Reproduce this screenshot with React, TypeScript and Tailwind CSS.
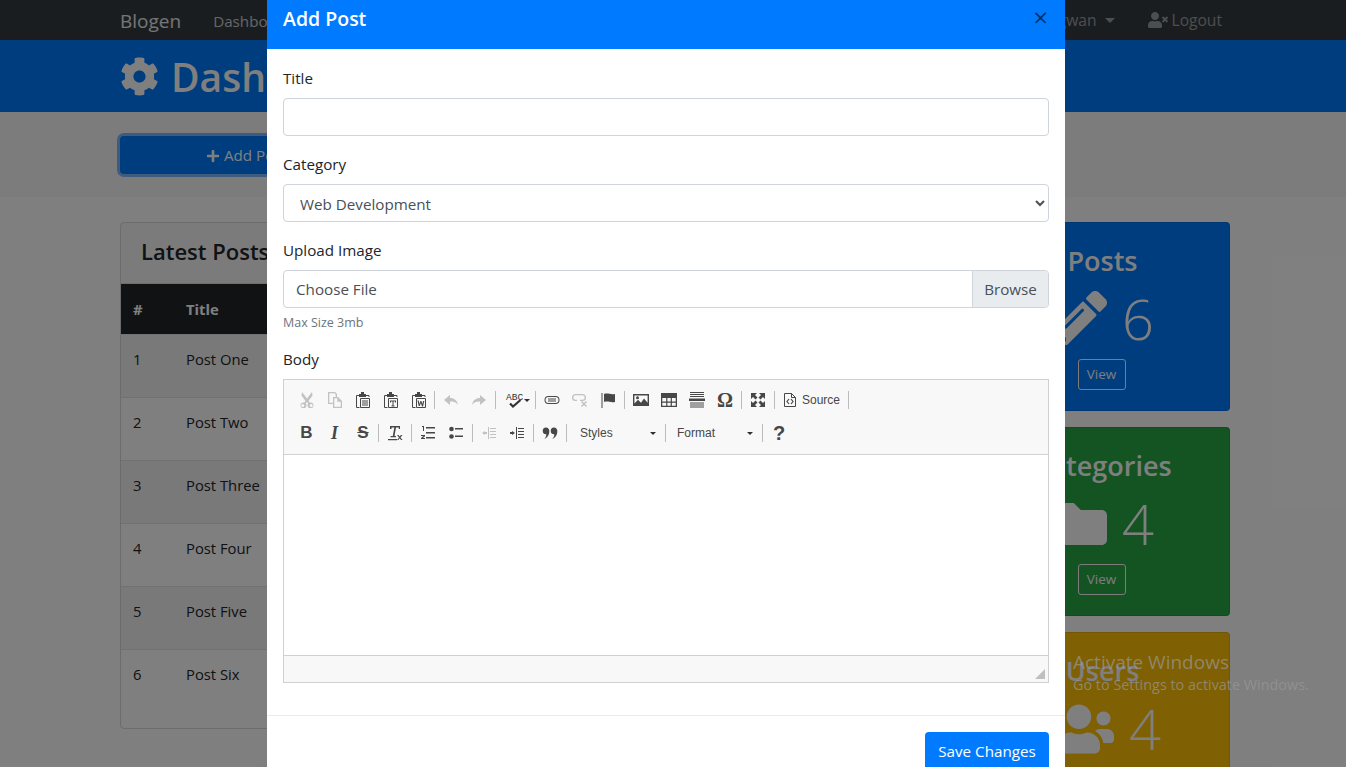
import type { ReactNode } from "react";
import { FaCog, FaFolder, FaPencilAlt, FaPlus, FaUsers, FaUserTimes } from "react-icons/fa";

const font = "font-['Open_Sans','Noto_Sans',sans-serif]";

const posts = ["Post One", "Post Two", "Post Three", "Post Four", "Post Five", "Post Six"];

function StatCard({ title, color, icon, count }: { title: string; color: string; icon: ReactNode; count: number }) {
  return (
    <div className={`h-[189px] rounded border border-black/10 p-5 text-center text-white ${color}`}>
      <h3 className="mb-2 h-[34px] pt-px whitespace-nowrap text-[27px] leading-[34px] font-semibold">{title}</h3>
      <div className="mb-[7px] flex h-[67px] items-center justify-center gap-[15px] text-[56px] leading-[67px] font-light">
        {icon}
        <span>{count}</span>
      </div>
      <button className="mr-[2px] h-[31px] w-12 rounded-[3px] border border-[#f8f9fa] text-[13.5px] text-[#f8f9fa]">View</button>
    </div>
  );
}

function Field({ label, children }: { label: string; children: ReactNode }) {
  return (
    <div className="mb-4">
      <label className="mb-2 block h-6 text-[15.2px] leading-6 text-[#212529]">{label}</label>
      {children}
    </div>
  );
}

function Btn({ children, off }: { children: ReactNode; off?: boolean }) {
  return (
    <span className={`flex h-7 w-7 shrink-0 items-center justify-center ${off ? "opacity-30" : ""}`}>
      <svg width="16" height="16" viewBox="0 0 16 16" fill="#474747">
        {children}
      </svg>
    </span>
  );
}

function Sep({ first }: { first?: boolean }) {
  return <span className={`mr-[2px] h-[18px] w-px shrink-0 bg-[#bcbcbc] ${first ? "ml-px" : "ml-[2px]"}`} />;
}

function Combo({ label, width, pad }: { label: string; width: string; pad: string }) {
  return (
    <span className={`flex h-7 shrink-0 items-center justify-between pr-[7px] ${pad} ${width}`}>
      <span>{label}</span>
      <span className="h-0 w-0 border-x-[3px] border-t-[3px] border-x-transparent border-t-[#2f2f2f]" />
    </span>
  );
}

// clipboard outline shared by the three paste buttons
const paste = (
  <>
    <path d="M4.500 3.500h-3v12H4.500M11 3.500h3V5" fill="none" stroke="#474747" />
    <path d="M4 2h2V0h3v2h2v3H4z" />
    <path d="M5.500 6.500h9v9h-9z" fill="none" stroke="#474747" />
  </>
);

function Toolbar() {
  return (
    <div className="h-[75px] border-b border-[#d1d1d1] bg-[#f8f8f8] pt-[6px] pl-[9px] font-['Liberation_Sans',sans-serif] text-[12px] text-[#474747]">
      <div className="mb-[5px] flex h-7 items-center">
        <Btn off>
          <path d="M3 0l5 6.500L13 0l.5 3.500L9.500 9l1.200 1.600a3 3 0 1 1-1.500 1L8 10l-1.200 1.600a3 3 0 1 1-1.500-1L6.500 9l-4-5.500zM3.800 12a1.500 1.500 0 1 0 0 3 1.500 1.500 0 0 0 0-3zm8.400 0a1.500 1.500 0 1 0 0 3 1.500 1.500 0 0 0 0-3z" />
        </Btn>
        <Btn off>
          <path d="M1 0h7l2 2v3h1l4 4v7H6v-4H1zm1.300 1.300v9.400H6V5h2.700V2.500L7.500 1.300zM7.300 6.300v8.400h6.400V9.700h-3.400V6.300z" />
        </Btn>
        <Btn>
          {paste}
          <path d="M7 8.500h6v1H7zm0 2h6v1H7zm0 2h6v1H7z" />
        </Btn>
        <Btn>
          {paste}
          <path d="M7 8.500h6v2h-1v-1h-1.500v4h1v1h-3v-1h1v-4H8v1H7z" />
        </Btn>
        <Btn>
          {paste}
          <path d="M6.500 8.500h1.200l.7 3.500 1-3h1l1 3 .7-3h1.200l-1.300 5.500h-1L9.900 11l-1.200 3h-1z" />
        </Btn>
        <Sep first />
        <Btn off>
          <path d="M7 3v3c4 0 7 2 8 7-2-3-4-3.500-8-3.500V13L1 8z" />
        </Btn>
        <Btn off>
          <path d="M9 3v3c-4 0-7 2-8 7 2-3 4-3.500 8-3.500V13l6-5z" />
        </Btn>
        <Sep />
        <span className="flex h-7 w-[35px] shrink-0 items-center pl-[8px]">
          <svg width="18" height="16" viewBox="0 0 18 16" fill="none" stroke="#333">
            <text x="0" y="8" fontSize="9.5" fontFamily="Liberation Mono" fill="#333" stroke="none">ABC</text>
            <path d="M4 11.500l3 3 7.500-6.500" strokeWidth="2.200" />
          </svg>
          <span className="h-0 w-0 border-x-[3px] border-t-[3px] border-x-transparent border-t-[#2f2f2f]" />
        </span>
        <Sep />
        <Btn>
          <path d="M4.500 4h7a4 4 0 0 1 0 8h-7a4 4 0 0 1 0-8zm0 1a3 3 0 0 0 0 6h7a3 3 0 0 0 0-6z" />
          <path d="M4 6.500h8v1H4zm0 2h8v1H4z" />
        </Btn>
        <Btn off>
          <path d="M3.500 2h7a3.500 3.500 0 0 1 0 7H8V7.700h2.500a2.200 2.200 0 0 0 0-4.400h-7a2.200 2.200 0 0 0 0 4.400H5V9H3.500a3.500 3.500 0 0 1 0-7z" />
          <path d="M9 10l1-1 2 2 2-2 1 1-2 2 2 2-1 1-2-2-2 2-1-1 2-2z" />
        </Btn>
        <Btn>
          <path d="M1.500 1H2.500v15H1.500zM4 2c3.500-1.500 6.500 1 11 0v8c-4.500 1-7.500-1.500-11 0z" />
        </Btn>
        <Sep />
        <Btn>
          <path d="M0 2h16v12H0zm1.400 1.400v8.200l3.600-3.800 3 3 3-4.300 3.600 4.300V3.400z" />
          <circle cx="4.500" cy="5.800" r="1.500" />
        </Btn>
        <Btn>
          <path d="M0 1h16v14H0zm1.300 5v3.500h3.900V6zm5.100 0v3.500h3.300V6zm4.500 0v3.500h3.800V6zM1.300 10.700v3h3.900v-3zm5.100 0v3h3.300v-3zm4.500 0v3h3.800v-3z" />
        </Btn>
        <Btn>
          <path d="M1 0h14v1H1zm0 2h14v1H1zm0 2h14v1H1zM0 6.500h16v2.500H0zM1 10.500h14v1H1zm0 2h14v1H1zm0 2h14v1H1z" />
        </Btn>
        <span className="flex h-7 w-7 shrink-0 items-center justify-center font-['Liberation_Serif',serif] text-[20px] font-bold">Ω</span>
        <Sep />
        <Btn>
          <path d="M1 1h6L5 3l2.500 2.500L5.500 7.500 3 5 1 7zm14 0v6l-2-2-2.500 2.500L8.500 5.500 11 3 9 1zM1 15V9l2 2 2.500-2.500 2 2L5 13l2 2zm14 0H9l2-2-2.500-2.500 2-2L13 11l2-2z" />
        </Btn>
        <Sep />
        <span className="flex h-7 w-[69px] shrink-0 items-center gap-[5px] pl-[6px]">
          <svg width="14" height="16" viewBox="0 0 14 16" fill="none" stroke="#474747">
            <path d="M1.500 1.500h7l4 4v9h-11zM8.500 1.500v4h4" />
            <path d="M6 7L4 9.500 6 12M8 7l2 2.500L8 12" strokeWidth="1.200" />
          </svg>
          <span>Source</span>
        </span>
        <Sep />
      </div>
      <div className="flex h-7 items-center">
        <span className="flex h-7 w-7 shrink-0 items-center justify-center pr-px text-[17px] font-bold">B</span>
        <span className="flex h-7 w-7 shrink-0 items-center justify-center pr-px font-['Liberation_Serif',serif] text-[18px] font-bold italic">I</span>
        <span className="flex h-7 w-7 shrink-0 items-center justify-center text-[17px] font-bold line-through">S</span>
        <Sep first />
        <Btn>
          <path d="M3 1h10v3h-1.200V2.500H9L7.500 11H9v1.200H3.500V11h2.300L7.300 2.500H4.500V4H3zM1 14h9v1.300H1z" />
          <path d="M10 10h1.500l1.200 1.500L14 10h1.500l-2 2.500 2 2.500H14l-1.300-1.700L11.300 15H10l2-2.500z" />
        </Btn>
        <Sep />
        <Btn>
          <path d="M6 2h9v1.500H6zm0 5h9v1.500H6zm0 5h9v1.500H6z" />
          <path d="M2 1h2v5H3V2H2zM1 10h4v1.200L3 13h2v1H1v-1l2.500-2H1z" />
        </Btn>
        <Btn>
          <path d="M7 3h8v1.500H7zm0 7.500h8V12H7z" />
          <circle cx="3.500" cy="4" r="2.300" />
          <circle cx="3.500" cy="11.500" r="2.300" />
        </Btn>
        <Sep />
        <Btn off>
          <path d="M7 2h1v12H7zM9 3h6v1H9zm0 3h6v1H9zm0 3h6v1H9zm0 3h6v1H9zM1 8l3-2v4zM4 7h2v2H4z" />
        </Btn>
        <Btn>
          <path d="M7 2h1v12H7zM9 3h6v1H9zm0 3h6v1H9zm0 3h6v1H9zm0 3h6v1H9zM6 8L3 6v4zM1 7h2v2H1z" />
        </Btn>
        <Sep />
        <Btn>
          <path d="M4 2.500a3.300 3.300 0 0 1 3.300 3.800c0 3.700-2 6.700-5 7.700 1.300-1.300 2-2.700 2-4.700A3.300 3.300 0 0 1 4 2.500zM12 2.500a3.300 3.300 0 0 1 3.300 3.800c0 3.700-2 6.700-5 7.700 1.300-1.300 2-2.700 2-4.700a3.300 3.300 0 0 1-.3-6.800z" />
        </Btn>
        <Sep />
        <Combo label="Styles" width="w-[94px]" pad="pl-[11px]" />
        <Sep />
        <Combo label="Format" width="w-[92px]" pad="pl-[9px]" />
        <Sep />
        <span className="flex h-7 w-7 shrink-0 items-center justify-center text-[20px] font-bold">?</span>
      </div>
    </div>
  );
}

export default function App() {
  return (
    <div className={`relative h-[767px] overflow-hidden bg-white ${font}`}>
      {/* page behind the modal */}
      <nav className="flex h-10 items-center justify-between bg-[#343a40] pr-[116px] pl-[120px] text-[15.2px]">
        <div className="flex items-center pt-[2px]">
          <span className="text-[19px] text-white/90">Blogen</span>
          <span className="ml-8 text-white/75">Dashboard</span>
        </div>
        <div className="flex items-center pt-px text-[15.6px] text-white/50">
          <span>Welcome Bagwan</span>
          <span className="mr-[33px] ml-2 h-0 w-0 border-x-[5px] border-t-[5px] border-x-transparent border-t-white/50" />
          <FaUserTimes size={20} className="mr-1" />
          <span className="mr-2">Logout</span>
        </div>
      </nav>
      <header className="flex h-[72px] items-center gap-3 bg-[#007bff] px-[120px] text-white">
        <FaCog size={39} />
        <h1 className="text-[39px] leading-none font-semibold">Dashboard</h1>
      </header>
      <section className="h-[85px] bg-[#f8f9fa] px-[120px] py-6">
        <button className="flex h-[38px] w-[255px] items-center justify-center gap-1 rounded bg-[#007bff] pt-px pr-[2px] text-[15.2px] text-white ring-[3px] ring-[#007bff]/50">
          <FaPlus size={14} />
          Add Post
        </button>
      </section>
      <main className="flex gap-[30px] pt-[25px] pr-[116px] pl-[120px]">
        <div className="w-[825px] shrink-0 self-start rounded border border-black/15 pb-4">
          <h2 className="h-[61px] border-b border-black/10 bg-black/[.03] px-5 text-[22px] leading-[56px] font-semibold text-[#212529]">Latest Posts</h2>
          <table className="w-full table-fixed text-left text-[14.8px] text-[#212529]">
            <thead className="bg-[#212529] text-white">
              <tr className="h-[50px]">
                <th className="w-[65px] pl-3 font-bold">#</th>
                <th className="font-bold">Title</th>
              </tr>
            </thead>
            <tbody>
              {posts.map((title, i) => (
                <tr key={title} className={`h-[63px] border-t border-[#dee2e6] align-top ${i % 2 === 0 ? "bg-black/5" : ""}`}>
                  <td className="pt-[13px] pl-3">{i + 1}</td>
                  <td className="pt-[13px]">{title}</td>
                </tr>
              ))}
            </tbody>
          </table>
        </div>
        <div className="flex w-[255px] shrink-0 flex-col gap-4">
          <StatCard title="Posts" color="bg-[#007bff]" icon={<FaPencilAlt size={56} />} count={6} />
          <StatCard title="Categories" color="bg-[#28a745]" icon={<FaFolder size={56} />} count={4} />
          <StatCard title="Users" color="bg-[#ffc107]" icon={<FaUsers size={70} />} count={4} />
        </div>
      </main>

      {/* backdrop */}
      <div className="absolute inset-0 bg-black/50" />

      {/* modal */}
      <div className="absolute top-0 left-[267px] w-[798px] bg-white">
        <div className="flex h-[49px] items-center justify-between bg-[#007bff] pr-[17px] pb-[11px] pl-4 text-white">
          <h5 className="text-[19.5px] font-semibold">Add Post</h5>
          <span className="mb-[4px] text-[26px] leading-none font-normal text-black/60">×</span>
        </div>
        <div className="px-4 pt-[17px] pb-8">
          <Field label="Title">
            <input className="block h-[38px] w-full rounded border border-[#ced4da] px-3" />
          </Field>
          <Field label="Category">
            <select className="block h-[38px] w-full rounded border border-[#ced4da] bg-white px-3 pt-px text-[15.2px] text-[#495057]">
              <option>Web Development</option>
            </select>
          </Field>
          <div className="mb-[14px]">
            <label className="mb-2 block h-6 text-[15.2px] leading-6 text-[#212529]">Upload Image</label>
            <div className="flex h-[38px] overflow-hidden rounded border border-[#ced4da] text-[15.2px] leading-9 text-[#495057]">
              <span className="flex-1 px-3">Choose File</span>
              <span className="w-[76px] border-l border-[#ced4da] bg-[#e9ecef] text-center">Browse</span>
            </div>
            <small className="mt-[5px] block h-5 text-[12.5px] leading-5 text-[#6c757d]">Max Size 3mb</small>
          </div>
          <div>
            <label className="mb-2 block h-6 text-[15.2px] leading-6 text-[#212529]">Body</label>
            <div className="h-[304px] border border-[#d1d1d1]">
              <Toolbar />
              <div className="h-[200px] bg-white" />
              <div className="relative h-[27px] border-t border-[#d1d1d1] bg-[#f8f8f8]">
                <span className="absolute right-[3px] bottom-[3px] h-0 w-0 border-b-[10px] border-l-[10px] border-b-[#bfbfbf] border-l-transparent" />
              </div>
            </div>
          </div>
        </div>
        <div className="flex justify-end border-t border-[#e9ecef] p-4">
          <button className="h-[38px] w-[124px] rounded bg-[#007bff] pt-px text-[15.2px] text-white">Save Changes</button>
        </div>
      </div>

      {/* windows watermark */}
      <div className="pointer-events-none absolute top-[650px] left-[1073px] text-[#999]/70">
        <div className="text-[19px] leading-6">Activate Windows</div>
        <div className="text-[14.4px] leading-[22px] whitespace-nowrap">Go to Settings to activate Windows.</div>
      </div>
    </div>
  );
}
